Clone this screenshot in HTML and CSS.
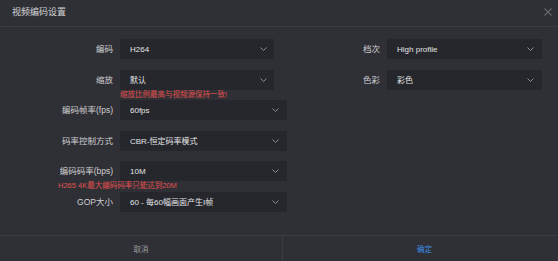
FILE: index.html
```html
<!DOCTYPE html>
<html lang="zh-CN">
<head>
<meta charset="utf-8">
<title>视频编码设置</title>
<link rel="stylesheet" href="styles.css">
</head>
<body>
<div class="dialog">
  <header class="dlg-head">
    <span class="title">视频编码设置</span>
    <span class="close">
      <svg width="8" height="8" viewBox="0 0 8 8"><path d="M0.5 0.5 L7.5 7.5 M7.5 0.5 L0.5 7.5" stroke="#66676d" stroke-width="1.1" fill="none"/></svg>
    </span>
  </header>

  <div class="form">
    <div class="row">
      <label class="lbl">编码</label>
      <div class="sel">H264<svg class="chev" width="7" height="4" viewBox="0 0 7 4"><path d="M0.5 0.5 L3.5 3.5 L6.5 0.5" stroke="#8d8e93" fill="none"/></svg></div>
      <label class="lbl lbl-r">档次</label>
      <div class="sel sel-r">High profile<svg class="chev" width="7" height="4" viewBox="0 0 7 4"><path d="M0.5 0.5 L3.5 3.5 L6.5 0.5" stroke="#8d8e93" fill="none"/></svg></div>
    </div>

    <div class="row">
      <label class="lbl">缩放</label>
      <div class="sel">默认<svg class="chev" width="7" height="4" viewBox="0 0 7 4"><path d="M0.5 0.5 L3.5 3.5 L6.5 0.5" stroke="#8d8e93" fill="none"/></svg></div>
      <label class="lbl lbl-r">色彩</label>
      <div class="sel sel-r">彩色<svg class="chev" width="7" height="4" viewBox="0 0 7 4"><path d="M0.5 0.5 L3.5 3.5 L6.5 0.5" stroke="#8d8e93" fill="none"/></svg></div>
      <div class="err err-sel">缩放比例最高与视频源保持一致!</div>
    </div>

    <div class="row">
      <label class="lbl">编码帧率(fps)</label>
      <div class="sel sel-w">60fps<svg class="chev" width="7" height="4" viewBox="0 0 7 4"><path d="M0.5 0.5 L3.5 3.5 L6.5 0.5" stroke="#8d8e93" fill="none"/></svg></div>
    </div>

    <div class="row">
      <label class="lbl">码率控制方式</label>
      <div class="sel sel-w">CBR-恒定码率模式<svg class="chev" width="7" height="4" viewBox="0 0 7 4"><path d="M0.5 0.5 L3.5 3.5 L6.5 0.5" stroke="#8d8e93" fill="none"/></svg></div>
    </div>

    <div class="row">
      <label class="lbl">编码码率(bps)</label>
      <div class="sel sel-w">10M<svg class="chev" width="7" height="4" viewBox="0 0 7 4"><path d="M0.5 0.5 L3.5 3.5 L6.5 0.5" stroke="#8d8e93" fill="none"/></svg></div>
      <div class="err err-lbl">H265 4K最大编码码率只能达到20M</div>
    </div>

    <div class="row">
      <label class="lbl">GOP大小</label>
      <div class="sel sel-w">60 - 每60幅画面产生I帧<svg class="chev" width="7" height="4" viewBox="0 0 7 4"><path d="M0.5 0.5 L3.5 3.5 L6.5 0.5" stroke="#8d8e93" fill="none"/></svg></div>
    </div>
  </div>

  <footer class="dlg-foot">
    <button class="btn btn-cancel">取消</button>
    <button class="btn btn-ok">确定</button>
  </footer>
</div>
</body>
</html>
```

FILE: styles.css
```css
* { box-sizing: border-box; }
html, body {
  margin: 0;
  padding: 0;
  background: #2f3036;
}
body {
  font-family: "Liberation Sans", "Noto Sans CJK SC", sans-serif;
  color: #d4d4d6;
}
.dialog {
  width: 558px;
  height: 261px;
  display: flex;
  flex-direction: column;
  background: #2f3036;
}
.dlg-head {
  height: 27px;
  border-bottom: 1px solid #3b3c43;
  display: flex;
  align-items: center;
  justify-content: space-between;
  padding: 0 6px 3px 12px;
}
.title {
  font-size: 9px;
  color: #d6d6d8;
}
.close {
  display: flex;
  margin-top: 1px;
}
.form {
  flex: 1;
  display: flex;
  flex-direction: column;
  gap: 10.6px;
  padding-top: 12px;
}
.row {
  position: relative;
  display: flex;
  align-items: center;
  height: 20px;
}
.lbl {
  width: 113px;
  text-align: right;
  font-size: 8.5px;
  color: #cfcfd2;
  margin-right: 7px;
  padding-bottom: 2px;
}
.lbl-r {
  width: 99px;
  margin-left: 7px;
}
.sel {
  width: 154px;
  height: 20px;
  background: #26272c;
  display: flex;
  align-items: center;
  justify-content: space-between;
  padding: 0 7px 0 10px;
  font-size: 8px;
  color: #e4e4e6;
}
.sel-r {
  width: 155px;
  padding-right: 8px;
}
.sel-w {
  width: 167px;
  padding-right: 8px;
}
.chev {
  flex: none;
}
.err {
  position: absolute;
  top: 20px;
  font-size: 7.5px;
  line-height: 9px;
  color: #e0514f;
  white-space: nowrap;
}
.err-sel { left: 120px; }
.err-lbl { left: 58px; }
.dlg-foot {
  height: 26px;
  border-top: 1px solid #3b3c43;
  display: flex;
}
.btn {
  border: 0;
  background: transparent;
  font-family: inherit;
  font-size: 7.5px;
  padding: 0;
  margin: 0;
}
.btn-cancel {
  width: 283px;
  border-right: 1px solid #3b3c43;
  color: #9a9b9f;
}
.btn-ok {
  flex: 1;
  color: #3d8ee6;
  padding-left: 8px;
}
```
